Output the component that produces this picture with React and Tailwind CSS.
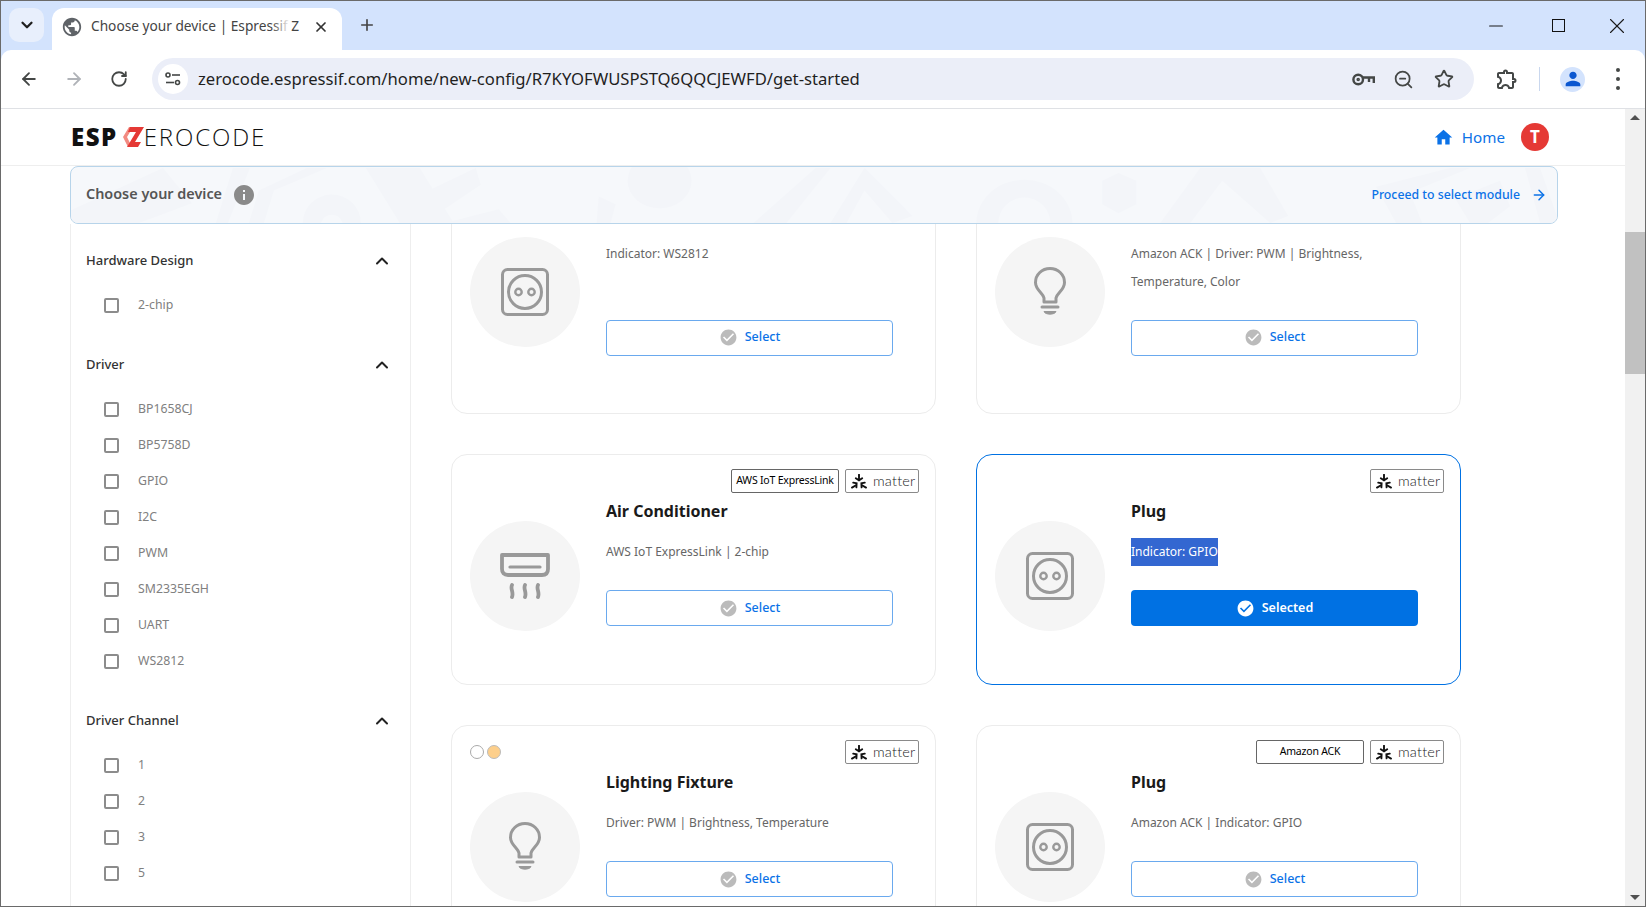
import { ArrowLeft, ArrowRight, ChevronDown, ChevronUp, Minus, Plus, RotateCw, Star, X, ZoomOut } from 'lucide-react';
import { MdCheckCircle, MdHome, MdInfo, MdOutlineExtension, MdPerson, MdPublic } from 'react-icons/md';

const FILTERS = [
  { title: 'Hardware Design', items: ['2-chip'] },
  { title: 'Driver', items: ['BP1658CJ', 'BP5758D', 'GPIO', 'I2C', 'PWM', 'SM2335EGH', 'UART', 'WS2812'] },
  { title: 'Driver Channel', items: ['1', '2', '3', '5'] },
];

// the first row is scrolled under the banner, only its lower part shows
const CARDS = [
  { icon: 'plug', title: 'Plug', lines: ['Indicator: WS2812'], tall: true, badges: [] },
  { icon: 'bulb', title: 'Lighting Fixture', lines: ['Amazon ACK | Driver: PWM | Brightness,', 'Temperature, Color'], tall: true, badges: [] },
  { icon: 'ac', title: 'Air Conditioner', lines: ['AWS IoT ExpressLink | 2-chip'], badges: ['AWS IoT ExpressLink', 'matter'] },
  { icon: 'plug', title: 'Plug', lines: ['Indicator: GPIO'], selected: true, badges: ['matter'] },
  { icon: 'bulb', title: 'Lighting Fixture', lines: ['Driver: PWM | Brightness, Temperature'], dots: true, badges: ['matter'] },
  { icon: 'plug', title: 'Plug', lines: ['Amazon ACK | Indicator: GPIO'], badges: ['Amazon ACK', 'matter'] },
];

const PlugIcon = () => (
  <svg width="50" height="50" viewBox="0 0 50 50" fill="none" stroke="#999999" strokeWidth="3">
    <rect x="2.5" y="2.5" width="45" height="45" rx="5" />
    <circle cx="25" cy="25" r="16.5" />
    <circle cx="18.5" cy="25" r="3.2" strokeWidth="2.4" />
    <circle cx="31.5" cy="25" r="3.2" strokeWidth="2.4" />
  </svg>
);

const BulbIcon = () => (
  <svg width="34" height="50" viewBox="0 0 34 50" fill="none" stroke="#999999" strokeWidth="3">
    <path d="M11 35 L11 31 C10 26 2.5 23 2.5 15.5 C2.5 7.5 9 1.5 17 1.5 C25 1.5 31.5 7.5 31.5 15.5 C31.5 23 24 26 23 31 L23 35 Z" strokeLinejoin="round" />
    <path d="M9 40 H25" strokeWidth="3" strokeLinecap="round" />
    <path d="M11 44.5 H23 C22 48 12 48 11 44.5 Z" fill="#999999" strokeWidth="1" />
  </svg>
);

const AcIcon = () => (
  <svg width="50" height="46" viewBox="0 0 50 46" fill="none" stroke="#999999" strokeWidth="3.8">
    <path d="M2 2 H48 V16 C48 20 46 22 42 22 H8 C4 22 2 20 2 16 Z" strokeLinejoin="round" />
    <path d="M10 14 H40" strokeLinecap="round" strokeWidth="3.2" />
    <path d="M12 32 C10 36 14 39 12 44" strokeLinecap="round" />
    <path d="M25 32 C23 36 27 39 25 44" strokeLinecap="round" />
    <path d="M38 32 C36 36 40 39 38 44" strokeLinecap="round" />
  </svg>
);

const DEVICE_ICONS = { plug: PlugIcon, bulb: BulbIcon, ac: AcIcon };

const MatterMark = () => (
  <svg width="16" height="15" viewBox="0 0 16 15" fill="none" stroke="#111111" strokeWidth="1.9" strokeLinecap="round">
    <path d="M8 .8 V5.5" />
    <path d="M4.8 4.2 L8 6.3 L11.2 4.2" />
    <path d="M1 13.6 L5 11.2" />
    <path d="M2.2 8.6 L5.6 9.2 L5.4 13.4" />
    <path d="M15 13.6 L11 11.2" />
    <path d="M13.8 8.6 L10.4 9.2 L10.6 13.4" />
  </svg>
);

const Badge = ({ label }) => {
  if (label === 'matter') {
    return (
      <span className="flex h-6 w-[74px] items-center gap-[6px] rounded-[2px] border border-[#8a8a8a] bg-white pl-[5px]">
        <MatterMark />
        <span className="font-['Lato',sans-serif] text-[14.5px] leading-none font-light tracking-[0.2px] text-[#222]">matter</span>
      </span>
    );
  }
  return (
    <span className="flex h-6 w-[108px] items-center justify-center rounded-[2px] border border-[#666] bg-white text-[10.5px] font-normal tracking-[-0.2px] whitespace-nowrap text-black">
      {label}
    </span>
  );
};

const DeviceCard = ({ card }) => {
  const Icon = DEVICE_ICONS[card.icon];
  return (
    <div
      className={`flex flex-col rounded-2xl border bg-white pt-[14px] pr-4 pl-[18px] ${card.tall ? 'h-[259px]' : 'h-[231px]'} ${
        card.selected ? 'border-[#0071e3]' : 'border-[#ececec]'
      }`}
    >
      <div className="flex h-6 items-center justify-between">
        <div className="flex gap-[3px]">
          {card.dots && (
            <>
              <span className="h-[14px] w-[14px] rounded-full border border-[#aaa] bg-white" />
              <span className="h-[14px] w-[14px] rounded-full border border-[#bbb] bg-[#fdcf8b]" />
            </>
          )}
        </div>
        <div className="flex gap-[6px]">
          {card.badges.map((b) => (
            <Badge key={b} label={b} />
          ))}
        </div>
      </div>
      <div className={`flex flex-1 items-center gap-[26px] ${card.tall ? 'pb-6' : 'pb-[26px]'}`}>
        <div className="flex h-[110px] w-[110px] shrink-0 items-center justify-center rounded-full bg-[#f5f5f5]">
          <Icon />
        </div>
        <div className="w-[287px] pb-[33px]">
          <h3 className="h-9 text-[16px] leading-9 font-bold text-[#1a1a1a]">{card.title}</h3>
          <div className={`mt-[9px] ${card.tall ? 'h-14' : 'h-7'}`}>
            {card.lines.map((line) => (
              <p key={line} className="h-7 text-[12px] leading-7 text-[#666]">
                {card.selected ? <span className="inline-block bg-[#3367d1] text-white">{line}</span> : line}
              </p>
            ))}
          </div>
          {card.selected ? (
            <button className="mt-6 flex h-9 w-full items-center justify-center gap-[7px] rounded bg-[#0071e3] text-[12.5px] font-semibold text-white">
              <MdCheckCircle size={19} />
              Selected
            </button>
          ) : (
            <button className="mt-6 flex h-9 w-full items-center justify-center gap-[7px] rounded border border-[#6aa9ee] bg-white text-[12.5px] font-medium text-[#0b72e7]">
              <MdCheckCircle size={19} className="text-[#bbbbbb]" />
              Select
            </button>
          )}
        </div>
      </div>
    </div>
  );
};

const FilterGroup = ({ group }) => (
  <section className="mb-8">
    <div className="flex h-5 items-center justify-between pr-[18px] text-[13px] font-medium text-[#333]">
      {group.title}
      <ChevronUp size={20} strokeWidth={2.4} className="text-[#222]" />
    </div>
    <ul className="mt-[16px] pl-[18px]">
      {group.items.map((item) => (
        <li key={item} className="flex h-9 items-center gap-[19px] text-[12.3px] text-[#808080]">
          <span className="h-[15px] w-[15px] rounded-[2px] border-2 border-[#8c8c8c]" />
          {item}
        </li>
      ))}
    </ul>
  </section>
);

const BannerPattern = () => (
  <svg className="absolute inset-0 h-full w-full" viewBox="0 0 1487 57" preserveAspectRatio="none" fill="#f3f5f9">
    <path d="M0 44 L92 1 L121 37 L68 57 L0 57 Z" />
    <path d="M162 1 L179 1 L157 57 L145 57 Z" />
    <path d="M193 57 L203 24 L256 1 L236 1 L188 24 L178 57 Z" />
    <path d="M232 57 A29 29 0 0 1 290 57 L272 57 A12 14 0 0 0 250 57 Z" />
    <path d="M295 1 L349 1 L383 57 L329 57 Z" />
    <path d="M360 23 L405 1 L410 18 L372 44 Z" />
    <path d="M374 57 L428 43 L440 57 Z" />
    <ellipse cx="589" cy="14" rx="32" ry="28" />
    <path d="M528 30 L545 38 L540 57 L526 57 Z" />
    <path d="M683 57 L745 1 L760 1 L716 57 Z" />
    <path d="M760 57 L794 1 L842 50 L822 57 L794 24 L776 57 Z" />
    <path d="M906 57 A48 44 0 0 1 1002 57 L980 57 A26 26 0 0 0 928 57 Z" />
    <path d="M1032 14 L1048 6 L1066 14 L1066 38 L1048 47 L1032 38 Z" />
    <path d="M1090 57 L1130 1 L1190 1 L1218 50 L1200 57 L1152 14 L1120 57 Z" />
    <path d="M1326 57 L1306 20 L1380 1 L1400 1 L1340 26 L1352 57 Z" />
    <path d="M1400 57 L1385 32 L1430 14 L1440 40 L1418 57 Z" />
    <path d="M1455 1 L1470 1 L1487 50 L1487 57 L1470 57 Z" />
  </svg>
);

const BrowserChrome = () => (
  <div className="shrink-0 bg-[#d3e3fd]">
    <div className="flex h-[49px] items-start pl-2 pt-[7px] text-[#444746]">
      <div className="flex h-[34px] w-[35px] items-center justify-center rounded-[10px] bg-[#e8effc]">
        <ChevronDown size={18} strokeWidth={3} className="text-[#1f1f1f]" />
      </div>
      <div className="relative ml-2 flex h-[42px] w-[290px] items-center rounded-t-[12px] bg-white pb-[5px] pl-[9px]">
        <MdPublic size={22} className="text-[#5f6368]" />
        <span className="ml-[8px] w-[210px] font-['Noto_Sans',sans-serif] text-[13.7px] whitespace-nowrap text-[#444]">
          Choose your device | Espressif Z
        </span>
        <span className="absolute top-2 left-[220px] h-5 w-[18px] bg-gradient-to-r from-transparent to-white" />
        <X size={16} strokeWidth={2.6} className="ml-[12px] text-[#333]" />
      </div>
      <Plus size={18} strokeWidth={2.2} className="mt-[8px] ml-4 text-[#444]" />
      <div className="ml-auto flex h-9 items-center pb-[1px] text-[#1a1a1a]">
        <Minus size={22} strokeWidth={1.1} />
        <span className="ml-[45px] h-[13px] w-[13px] border border-[#111]" />
        <X size={26} strokeWidth={1} className="ml-[39px] mr-[15px]" />
      </div>
    </div>
    <div className="flex h-[59px] items-center rounded-t-[10px] border-b border-[#dfe1e5] bg-white text-[#444746]">
      <ArrowLeft size={20} strokeWidth={2.2} className="ml-[18px]" />
      <ArrowRight size={20} strokeWidth={2.2} className="ml-[25px] text-[#b0b3b8]" />
      <RotateCw size={18} strokeWidth={2.4} className="ml-[26px]" />
      <div className="ml-6 flex h-[42px] w-[1322px] items-center rounded-full bg-[#ebeef8] pl-[6px]">
        <span className="flex h-[30px] w-[30px] items-center justify-center rounded-full bg-white">
          <svg width="16" height="14" viewBox="0 0 16 14" fill="none" stroke="#444746" strokeWidth="1.6">
            <circle cx="3" cy="3" r="2" />
            <path d="M7 3 H15" />
            <path d="M1 10.5 H9" />
            <circle cx="12.5" cy="10.5" r="2" />
          </svg>
        </span>
        <span className="ml-[10px] font-['Noto_Sans',sans-serif] text-[16.66px] whitespace-nowrap text-[#1f1f1f]">
          zerocode.espressif.com/home/new-config/R7KYOFWUSPSTQ6QQCJEWFD/get-started
        </span>
        <div className="ml-auto flex items-center gap-[18px] pr-[20px]">
          <svg width="23" height="13" viewBox="0 0 23 13" fill="none" stroke="#444746" strokeWidth="2.4">
            <circle cx="6.2" cy="6.5" r="4.8" />
            <circle cx="6.2" cy="6.5" r="1" strokeWidth="1.6" />
            <path d="M11 4.5 H21.8 V10 M17 4.5 V9" />
          </svg>
          <ZoomOut size={21} strokeWidth={2} className="mr-[2px]" />
          <Star size={20} strokeWidth={2.2} />
        </div>
      </div>
      <MdOutlineExtension size={24} className="ml-[21px]" />
      <span className="ml-[20px] h-6 w-px bg-[#c9d7ee]" />
      <span className="ml-[20px] flex h-[25px] w-[25px] items-center justify-center rounded-full bg-[#d3e3fd]">
        <MdPerson size={22} className="text-[#0b57d0]" />
      </span>
      <span className="ml-[31px] flex flex-col gap-[5px]">
        <i className="h-[4px] w-[4px] rounded-full bg-[#444746]" />
        <i className="h-[4px] w-[4px] rounded-full bg-[#444746]" />
        <i className="h-[4px] w-[4px] rounded-full bg-[#444746]" />
      </span>
    </div>
  </div>
);

const Logo = () => (
  <div className="-ml-[1px] flex items-center">
    <span className="font-['Open_Sans',sans-serif] text-[24px] leading-none font-extrabold tracking-[1.5px] text-[#111]">ESP</span>
    <svg width="21" height="20" viewBox="0 0 21 20" className="ml-[5px]">
      <path d="M6 0 H10 L4 10 L7 16 L5 20 L0 10 Z" fill="#f28b82" />
      <path d="M7 0 H21 L12 15 H18 L15 20 H4 L13 5 H5 Z" fill="#e53935" />
    </svg>
    <span className="font-['Open_Sans',sans-serif] text-[24px] leading-none font-light tracking-[1.9px] text-[#111]">EROCODE</span>
  </div>
);

const Scrollbar = () => (
  <div className="relative flex w-5 shrink-0 flex-col items-center justify-between bg-[#f1f1f1] py-[6px]">
    <span className="h-0 w-0 border-x-[5px] border-b-[5px] border-x-transparent border-b-[#505050]" />
    <span className="absolute top-[123px] left-0 h-[142px] w-5 bg-[#c1c1c1]" />
    <span className="h-0 w-0 border-x-[5px] border-t-[5px] border-x-transparent border-t-[#505050]" />
  </div>
);

const App = () => (
  <div className="flex h-[907px] w-[1646px] flex-col overflow-hidden border border-[#6a6a6a] bg-white font-['Noto_Sans',sans-serif]">
    <BrowserChrome />
    <div className="flex min-h-0 flex-1">
      <div className="flex min-w-0 flex-1 flex-col">
        <header className="flex h-[57px] shrink-0 items-center justify-between border-b border-[#eeeeee] pr-[76px] pl-[71px]">
          <Logo />
          <div className="flex items-center">
            <MdHome size={21} className="text-[#0b72e7]" />
            <span className="ml-[8px] text-[15.2px] font-normal text-[#0b72e7]">Home</span>
            <span className="ml-[16px] flex h-7 w-7 items-center justify-center rounded-full bg-[#e53935] text-[17px] font-bold text-white">T</span>
          </div>
        </header>
        <div className="relative ml-[69px] flex h-[58px] w-[1488px] shrink-0 items-center justify-between overflow-hidden rounded-lg border border-[#b7d4ea] bg-[#f6f8fb] pr-[10px] pl-[15px]">
          <BannerPattern />
          <div className="relative flex items-center gap-[10px] text-[14.4px] font-semibold text-[#555]">
            <span className="pb-[3px]">Choose your device</span>
            <MdInfo size={24} className="text-[#8a8a8a]" />
          </div>
          <div className="relative flex items-center gap-[11px] text-[12.3px] font-medium text-[#0b72e7]">
            Proceed to select module
            <ArrowRight size={16} strokeWidth={2.2} />
          </div>
        </div>
        <div className="flex min-h-0 flex-1 overflow-hidden">
          <aside className="ml-[69px] w-[341px] shrink-0 border-x border-[#eeeeee] pt-[27px] pl-[15px]">
            {FILTERS.map((group) => (
              <FilterGroup key={group.title} group={group} />
            ))}
          </aside>
          <main className="-mt-[69px] grid grid-cols-[485px_485px] content-start gap-x-10 gap-y-10 pl-10">
            {CARDS.map((card, i) => (
              <DeviceCard key={i} card={card} />
            ))}
          </main>
        </div>
      </div>
      <Scrollbar />
    </div>
  </div>
);

export default App;
